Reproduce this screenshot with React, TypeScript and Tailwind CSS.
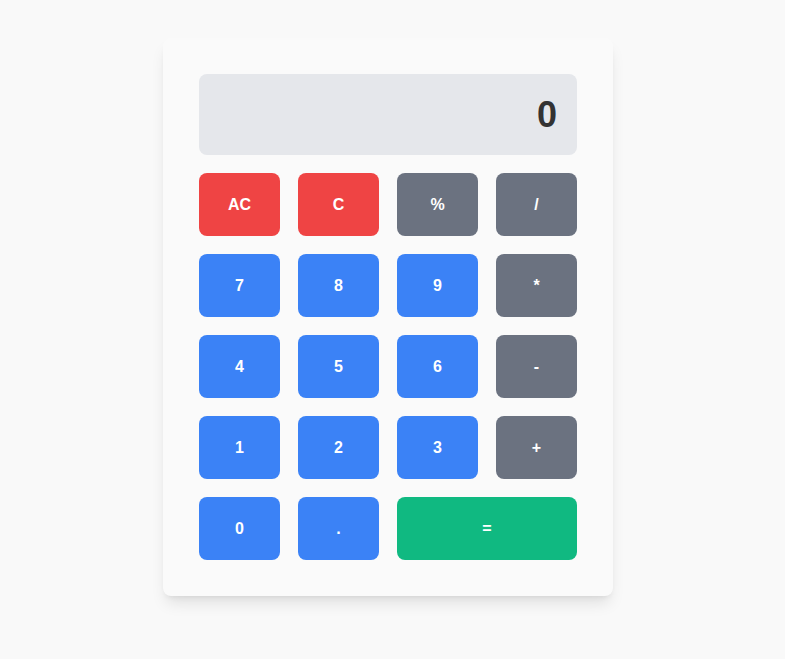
import React, { useState } from "react";

const keys: { label: string; kind: "red" | "gray" | "blue" | "green"; wide?: boolean }[] = [
  { label: "AC", kind: "red" },
  { label: "C", kind: "red" },
  { label: "%", kind: "gray" },
  { label: "/", kind: "gray" },
  { label: "7", kind: "blue" },
  { label: "8", kind: "blue" },
  { label: "9", kind: "blue" },
  { label: "*", kind: "gray" },
  { label: "4", kind: "blue" },
  { label: "5", kind: "blue" },
  { label: "6", kind: "blue" },
  { label: "-", kind: "gray" },
  { label: "1", kind: "blue" },
  { label: "2", kind: "blue" },
  { label: "3", kind: "blue" },
  { label: "+", kind: "gray" },
  { label: "0", kind: "blue" },
  { label: ".", kind: "blue" },
  { label: "=", kind: "green", wide: true },
];

const colors = {
  red: "bg-[#ef4444] hover:bg-red-600",
  gray: "bg-[#6b7280] hover:bg-gray-600",
  blue: "bg-[#3b82f6] hover:bg-blue-600",
  green: "bg-[#10b981] hover:bg-emerald-600",
};

export default function App() {
  const [display] = useState("0");

  return (
    <div
      className="min-h-screen bg-[#f9f9f9] pt-[38px]"
      style={{ fontFamily: '"Liberation Sans", Arial, sans-serif' }}
    >
      <div className="ml-[163px] w-[450px] rounded-lg bg-[#fafafa] p-9 shadow-lg">
        <div className="flex h-[81px] items-center justify-end rounded-lg bg-[#e5e7eb] px-5 text-4xl font-bold text-[#333333]">
          {display}
        </div>
        <div className="mt-[18px] grid grid-cols-4 gap-[18px]">
          {keys.map((k) => (
            <button
              key={k.label}
              className={`h-[63px] rounded-lg text-base font-bold text-white ${colors[k.kind]} ${
                k.wide ? "col-span-2" : ""
              }`}
            >
              {k.label}
            </button>
          ))}
        </div>
      </div>
    </div>
  );
}
